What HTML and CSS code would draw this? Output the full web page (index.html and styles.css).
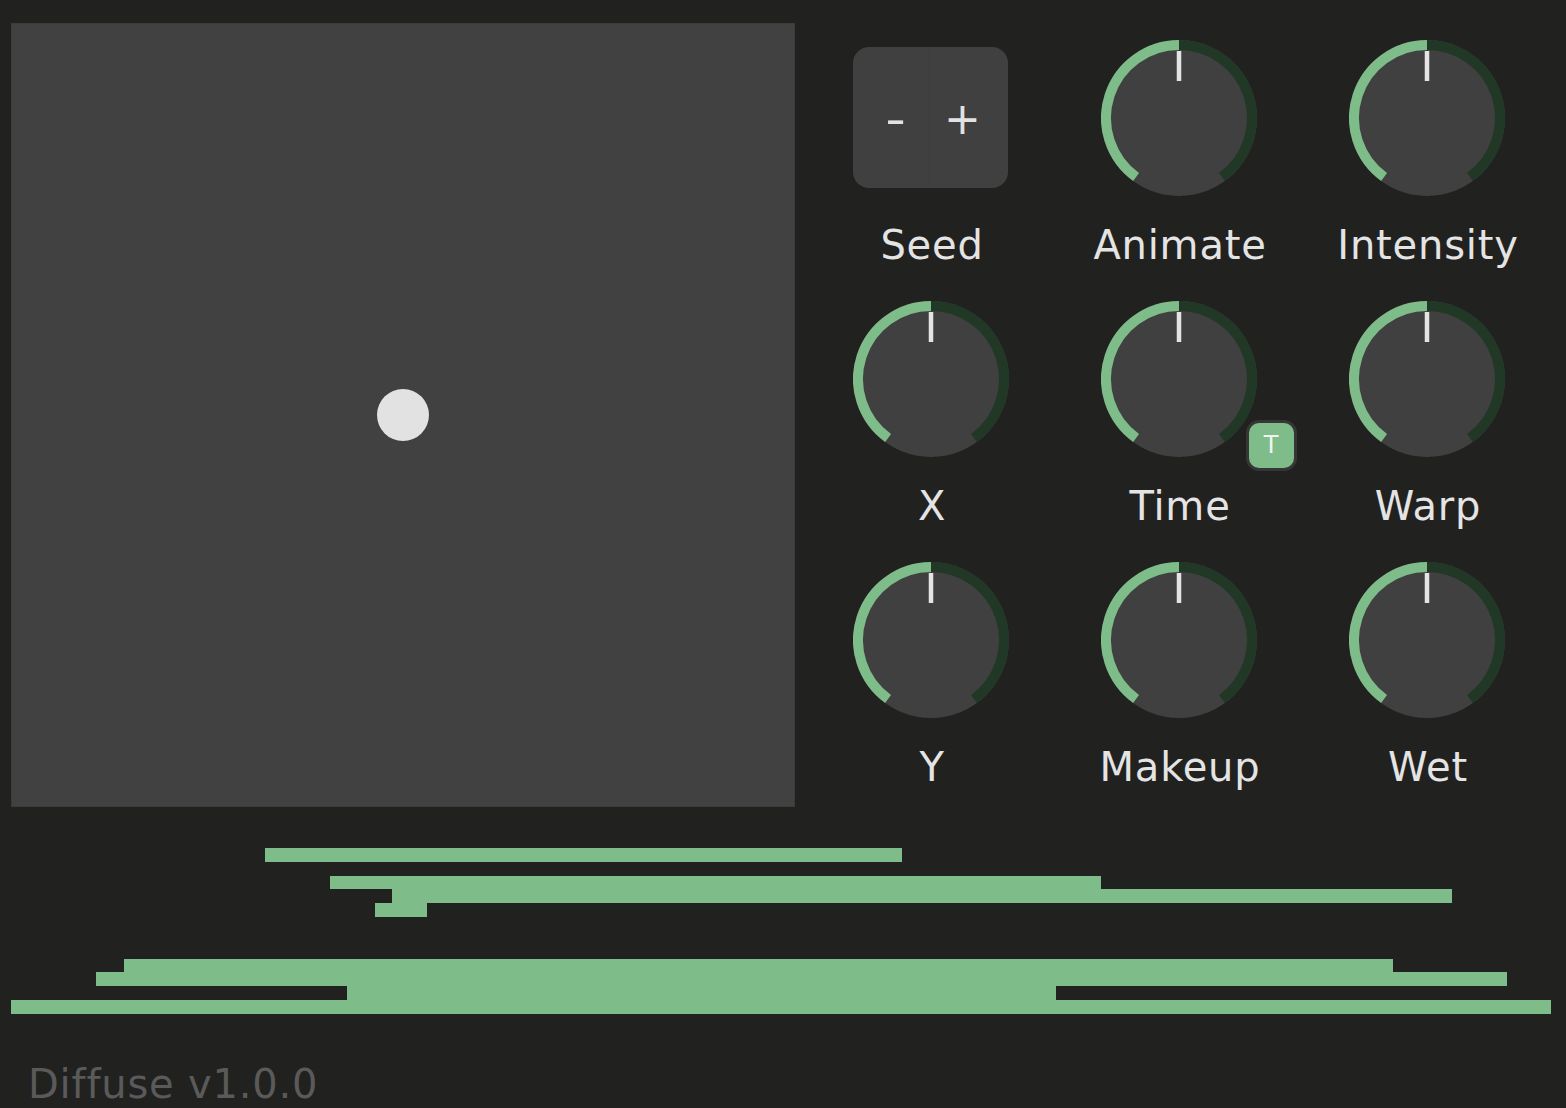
FILE: index.html
```html
<!DOCTYPE html>
<html>
<head>
<meta charset="utf-8">
<link rel="stylesheet" href="styles.css">
</head>
<body>
<div class="app">
  <div class="top">
    <div class="xypad"><div class="handle"></div></div>
    <div class="controls">
      <div class="cell">
        <div class="ctl">
          <div class="seed">
            <div class="half minus">-</div>
            <div class="half plus">+</div>
          </div>
        </div>
        <div class="label">Seed</div>
      </div>
      <div class="cell">
        <div class="ctl"><svg class="knob" viewBox="0 0 156 156"><circle cx="78" cy="78" r="78" class="body"/><path class="arc-on" d="M35.09 137.06 A73 73 0 0 1 78 5"/><path class="arc-off" d="M78 5 A73 73 0 0 1 120.91 137.06"/><line x1="78" y1="11" x2="78" y2="41" class="ptr"/></svg></div>
        <div class="label">Animate</div>
      </div>
      <div class="cell">
        <div class="ctl"><svg class="knob" viewBox="0 0 156 156"><circle cx="78" cy="78" r="78" class="body"/><path class="arc-on" d="M35.09 137.06 A73 73 0 0 1 78 5"/><path class="arc-off" d="M78 5 A73 73 0 0 1 120.91 137.06"/><line x1="78" y1="11" x2="78" y2="41" class="ptr"/></svg></div>
        <div class="label">Intensity</div>
      </div>
      <div class="cell">
        <div class="ctl"><svg class="knob" viewBox="0 0 156 156"><circle cx="78" cy="78" r="78" class="body"/><path class="arc-on" d="M35.09 137.06 A73 73 0 0 1 78 5"/><path class="arc-off" d="M78 5 A73 73 0 0 1 120.91 137.06"/><line x1="78" y1="11" x2="78" y2="41" class="ptr"/></svg></div>
        <div class="label">X</div>
      </div>
      <div class="cell">
        <div class="ctl"><svg class="knob" viewBox="0 0 156 156"><circle cx="78" cy="78" r="78" class="body"/><path class="arc-on" d="M35.09 137.06 A73 73 0 0 1 78 5"/><path class="arc-off" d="M78 5 A73 73 0 0 1 120.91 137.06"/><line x1="78" y1="11" x2="78" y2="41" class="ptr"/></svg>
          <div class="badge">T</div>
        </div>
        <div class="label">Time</div>
      </div>
      <div class="cell">
        <div class="ctl"><svg class="knob" viewBox="0 0 156 156"><circle cx="78" cy="78" r="78" class="body"/><path class="arc-on" d="M35.09 137.06 A73 73 0 0 1 78 5"/><path class="arc-off" d="M78 5 A73 73 0 0 1 120.91 137.06"/><line x1="78" y1="11" x2="78" y2="41" class="ptr"/></svg></div>
        <div class="label">Warp</div>
      </div>
      <div class="cell">
        <div class="ctl"><svg class="knob" viewBox="0 0 156 156"><circle cx="78" cy="78" r="78" class="body"/><path class="arc-on" d="M35.09 137.06 A73 73 0 0 1 78 5"/><path class="arc-off" d="M78 5 A73 73 0 0 1 120.91 137.06"/><line x1="78" y1="11" x2="78" y2="41" class="ptr"/></svg></div>
        <div class="label">Y</div>
      </div>
      <div class="cell">
        <div class="ctl"><svg class="knob" viewBox="0 0 156 156"><circle cx="78" cy="78" r="78" class="body"/><path class="arc-on" d="M35.09 137.06 A73 73 0 0 1 78 5"/><path class="arc-off" d="M78 5 A73 73 0 0 1 120.91 137.06"/><line x1="78" y1="11" x2="78" y2="41" class="ptr"/></svg></div>
        <div class="label">Makeup</div>
      </div>
      <div class="cell">
        <div class="ctl"><svg class="knob" viewBox="0 0 156 156"><circle cx="78" cy="78" r="78" class="body"/><path class="arc-on" d="M35.09 137.06 A73 73 0 0 1 78 5"/><path class="arc-off" d="M78 5 A73 73 0 0 1 120.91 137.06"/><line x1="78" y1="11" x2="78" y2="41" class="ptr"/></svg></div>
        <div class="label">Wet</div>
      </div>
    </div>
  </div>
  <div class="bars">
    <div class="row"><div class="bar" style="margin-left:254px;width:637px"></div></div>
    <div class="row"></div>
    <div class="row"><div class="bar" style="margin-left:319px;width:771px"></div></div>
    <div class="row"><div class="bar" style="margin-left:381px;width:1060px"></div></div>
    <div class="row"><div class="bar" style="margin-left:364px;width:52px"></div></div>
    <div class="row"></div>
    <div class="row"></div>
    <div class="row"></div>
    <div class="row"><div class="bar" style="margin-left:113px;width:1269px"></div></div>
    <div class="row"><div class="bar" style="margin-left:85px;width:1411px"></div></div>
    <div class="row"><div class="bar" style="margin-left:336px;width:709px"></div></div>
    <div class="row"><div class="bar" style="margin-left:0px;width:1540px"></div></div>
  </div>
  <div class="footer">Diffuse v1.0.0</div>
</div>
</body>
</html>
```

FILE: styles.css
```css
html, body {
  margin: 0;
  padding: 0;
  background: #212120;
}
body {
  width: 1566px;
  height: 1108px;
  overflow: hidden;
  font-family: "DejaVu Sans", Verdana, sans-serif;
}
.app {
  padding: 23px 0 0 11px;
}
.top {
  display: flex;
  align-items: flex-start;
}
.xypad {
  width: 784px;
  height: 784px;
  background: #414141;
  box-sizing: border-box;
  border: 1px solid #3b3b3b;
  display: flex;
  align-items: center;
  justify-content: center;
}
.handle {
  width: 52px;
  height: 52px;
  border-radius: 50%;
  background: #e2e2e2;
}
.controls {
  margin-left: 11.5px;
  width: 744px;
  height: 784px;
  display: grid;
  grid-template-columns: repeat(3, 248px);
  grid-template-rows: repeat(3, 261.33px);
}
.cell {
  display: flex;
  flex-direction: column;
  align-items: center;
  padding-top: 16.5px;
}
.ctl {
  position: relative;
  width: 156px;
  height: 156px;
  display: flex;
  align-items: center;
  justify-content: center;
}
.knob {
  width: 156px;
  height: 156px;
  display: block;
}
.knob .body { fill: #404040; }
.knob .arc-on { fill: none; stroke: #7ebd89; stroke-width: 10; }
.knob .arc-off { fill: none; stroke: #213826; stroke-width: 10; }
.knob .ptr { stroke: #e4e4e4; stroke-width: 4.5; }
.label {
  margin-top: 26px;
  padding-left: 3px;
  font-size: 40px;
  line-height: 46px;
  letter-spacing: 0.8px;
  color: #e4e4e4;
  white-space: nowrap;
}
.seed {
  width: 155px;
  height: 141px;
  border-radius: 16px;
  background: #404040;
  display: flex;
  overflow: hidden;
}
.half {
  flex: 1;
  display: flex;
  align-items: center;
  justify-content: center;
  color: #e2e2e2;
  font-size: 44px;
  line-height: 1;
  padding-top: 2px;
}
.minus {
  padding-left: 8px;
  transform: scaleX(1.3);
}
.plus {
  padding-right: 12px;
  border-left: 1px solid #3e3e3e;
}
.badge {
  position: absolute;
  left: 145px;
  top: 119px;
  width: 45px;
  height: 45px;
  border: 3px solid #363636;
  border-radius: 13px;
  background: #7ebd89;
  color: #f2f2f2;
  font-size: 24px;
  line-height: 45px;
  text-align: center;
}
.bars {
  margin-top: 41px;
  width: 1540px;
  height: 166px;
  display: grid;
  grid-template-rows: repeat(12, 1fr);
}
.row {
  display: flex;
}
.bar {
  background: #7ebd89;
  height: 100%;
}
.footer {
  margin-top: 47px;
  margin-left: 17px;
  font-size: 40px;
  line-height: 46px;
  letter-spacing: 0.8px;
  color: #5a5a5a;
}
```
